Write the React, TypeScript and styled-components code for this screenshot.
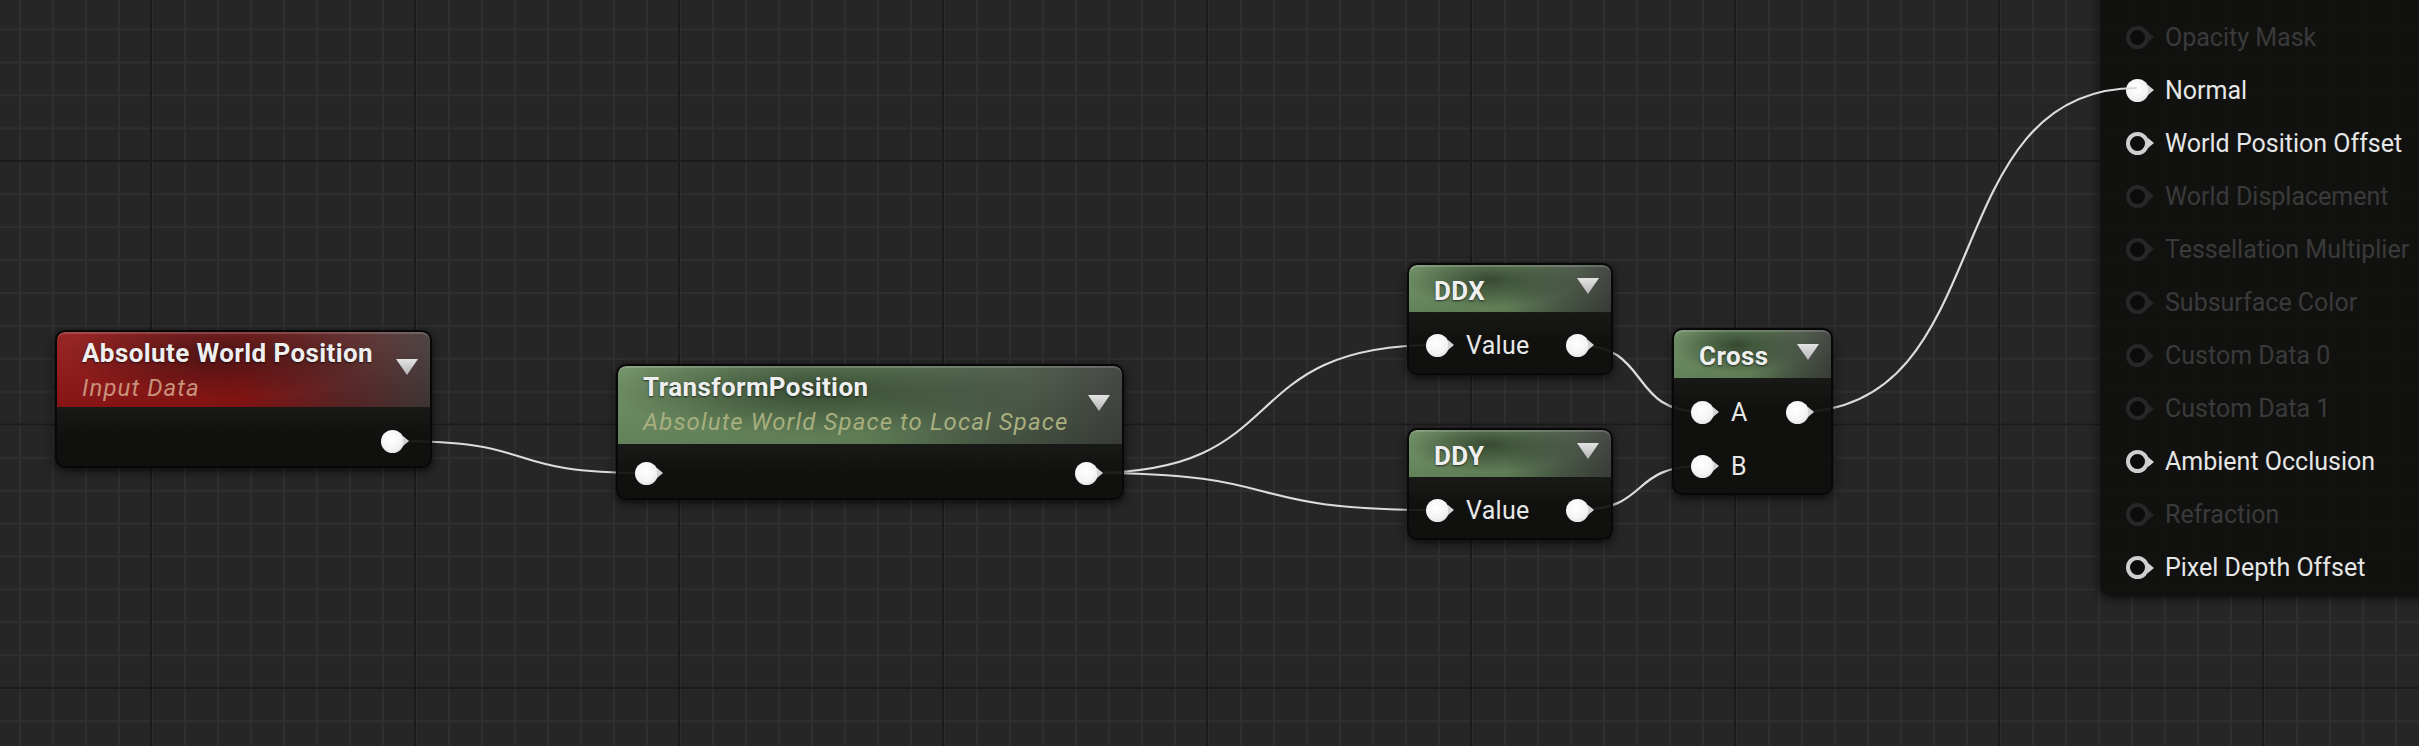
import React from 'react';
import styled, { createGlobalStyle, css } from 'styled-components';

type Tone = 'red' | 'green';
type Pt = [number, number];

const GlobalStyle = createGlobalStyle`
  html, body { margin: 0; padding: 0; background: #262626; }
  body { font-family: Roboto, "Noto Sans", Arial, sans-serif; overflow: hidden; }
`;

const Canvas = styled.div`
  position: relative;
  width: 2419px;
  height: 746px;
  overflow: hidden;
  background-color: #262626;
  background-image:
    linear-gradient(to right, #1b1b1b 0 2px, transparent 2px),
    linear-gradient(to bottom, #1b1b1b 0 2px, transparent 2px),
    linear-gradient(to right, #2f2f2f 0 2px, transparent 2px),
    linear-gradient(to bottom, #2f2f2f 0 2px, transparent 2px);
  background-size: 264px 100%, 100% 263.5px, 33px 100%, 100% 32.94px;
  background-position: 150px 0, 0 160px, 19px 0, 0 28.5px;
`;

const WireLayer = styled.svg`
  position: absolute;
  left: 0;
  top: 0;
  z-index: 2;
  pointer-events: none;
  path {
    fill: none;
    stroke: #dcdcdc;
    stroke-width: 2.2;
  }
`;

const Node = styled.div<{ $x: number; $y: number; $w: number }>`
  position: absolute;
  left: ${(p) => p.$x}px;
  top: ${(p) => p.$y}px;
  width: ${(p) => p.$w}px;
  box-sizing: border-box;
  border: 2px solid #080808;
  border-radius: 10px;
  background: rgba(15, 16, 14, 0.93);
  box-shadow: 0 3px 10px rgba(0, 0, 0, 0.7);
  overflow: hidden;
  z-index: 3;
`;

const tones = {
  red: css`
    background:
      linear-gradient(to bottom, rgba(255, 255, 255, 0.07), rgba(0, 0, 0, 0.08)),
      radial-gradient(ellipse 42% 60% at 44% 28%, rgba(25, 0, 0, 0.6), rgba(25, 0, 0, 0) 100%),
      linear-gradient(to right, #921616 0%, #891313 50%, #5e2424 76%, #433838 100%);
  `,
  green: css`
    background:
      linear-gradient(to bottom, rgba(255, 255, 255, 0.06), rgba(0, 0, 0, 0.08)),
      radial-gradient(ellipse 42% 60% at 40% 30%, rgba(10, 22, 8, 0.6), rgba(10, 22, 8, 0) 100%),
      linear-gradient(to right, #6b8d61 0%, #65865b 48%, #4b5c47 74%, #3c3f3b 100%);
  `,
};

const Header = styled.div<{ $tone: Tone; $h: number }>`
  height: ${(p) => p.$h}px;
  box-sizing: border-box;
  display: flex;
  align-items: flex-start;
  justify-content: space-between;
  padding: 0 12px 0 25px;
  border-radius: 8px 8px 0 0;
  box-shadow: inset 0 2px 0 rgba(255, 255, 255, 0.16);
  ${(p) => tones[p.$tone]};
`;

const HeaderText = styled.div<{ $pt: number }>`
  display: flex;
  flex-direction: column;
  padding-top: ${(p) => p.$pt}px;
  min-width: 0;
`;

const Title = styled.div`
  font-size: 26px;
  line-height: 26px;
  font-weight: 700;
  letter-spacing: 0.4px;
  color: #efefef;
  white-space: nowrap;
  text-shadow: 0 1px 2px rgba(0, 0, 0, 0.6);
`;

const Subtitle = styled.div<{ $color: string }>`
  margin-top: 11px;
  font-size: 24px;
  line-height: 23px;
  font-style: italic;
  letter-spacing: 1.1px;
  color: ${(p) => p.$color};
  white-space: nowrap;
`;

const ArrowSvg = styled.svg`
  flex: none;
  align-self: center;
  margin-bottom: 5px;
  width: 22px;
  height: 16px;
`;

const DropArrow = () => (
  <ArrowSvg viewBox="0 0 22 16">
    <defs>
      <linearGradient id="dropGrad" x1="0" y1="0" x2="0" y2="1">
        <stop offset="0" stopColor="#e4e4e4" />
        <stop offset="1" stopColor="#b4b4b4" />
      </linearGradient>
    </defs>
    <polygon points="0,0 22,0 11,16" fill="url(#dropGrad)" />
  </ArrowSvg>
);

const Body = styled.div<{ $pt: number; $pb: number; $gap?: number }>`
  display: flex;
  flex-direction: column;
  gap: ${(p) => p.$gap ?? 0}px;
  padding: ${(p) => p.$pt}px 0 ${(p) => p.$pb}px;
  background: linear-gradient(to bottom, rgba(40, 42, 38, 0.35), rgba(0, 0, 0, 0) 30px);
`;

const PinRow = styled.div<{ $pr?: number }>`
  height: 24px;
  display: flex;
  align-items: center;
  justify-content: space-between;
  padding: 0 ${(p) => p.$pr ?? 17}px 0 17px;
`;

const PinSide = styled.div`
  display: flex;
  align-items: center;
  gap: 12px;
  margin-right: auto;
`;

const PinLabel = styled.span`
  font-size: 25px;
  line-height: 25px;
  letter-spacing: 0.3px;
  color: #e8e8e8;
  white-space: nowrap;
`;

const PinShape = styled.span`
  flex: none;
  display: inline-flex;
  align-items: center;
`;

const PinDot = styled.span<{ $filled: boolean; $dim: boolean }>`
  width: 23px;
  height: 23px;
  box-sizing: border-box;
  border-radius: 50%;
  ${(p) =>
    p.$filled
      ? css`
          background: radial-gradient(circle at 45% 40%, #ffffff 0%, #f4f4f4 55%, #cdcdcd 100%);
        `
      : css`
          background: #0c0c0c;
          border: 4px solid ${p.$dim ? '#272727' : '#cfcfcf'};
        `}
`;

const PinTip = styled.span<{ $dim: boolean }>`
  width: 0;
  height: 0;
  margin-left: -1px;
  border-left: 6px solid ${(p) => (p.$dim ? '#272727' : '#d4d4d4')};
  border-top: 5px solid transparent;
  border-bottom: 5px solid transparent;
`;

const Pin = ({ filled = true, dim = false }: { filled?: boolean; dim?: boolean }) => (
  <PinShape>
    <PinDot $filled={filled} $dim={dim} />
    <PinTip $dim={dim} />
  </PinShape>
);

const OutputPanel = styled.div`
  position: absolute;
  left: 2100px;
  top: -40px;
  width: 340px;
  box-sizing: border-box;
  padding: 50.5px 0 2.5px 26px;
  display: flex;
  flex-direction: column;
  background: rgba(17, 18, 16, 0.96);
  border-radius: 0 0 0 12px;
  box-shadow: -2px 2px 8px rgba(0, 0, 0, 0.55);
  z-index: 1;
`;

const PanelRow = styled.div`
  height: 53.1px;
  display: flex;
  align-items: center;
  gap: 11px;
`;

const PanelLabel = styled.span<{ $dim: boolean }>`
  font-size: 25px;
  line-height: 25px;
  color: ${(p) => (p.$dim ? '#3a3a3a' : '#e6e6e6')};
  white-space: nowrap;
`;

const outputs = [
  { label: 'Opacity Mask', dim: true, filled: false },
  { label: 'Normal', dim: false, filled: true },
  { label: 'World Position Offset', dim: false, filled: false },
  { label: 'World Displacement', dim: true, filled: false },
  { label: 'Tessellation Multiplier', dim: true, filled: false },
  { label: 'Subsurface Color', dim: true, filled: false },
  { label: 'Custom Data 0', dim: true, filled: false },
  { label: 'Custom Data 1', dim: true, filled: false },
  { label: 'Ambient Occlusion', dim: false, filled: false },
  { label: 'Refraction', dim: true, filled: false },
  { label: 'Pixel Depth Offset', dim: false, filled: false },
];

const P = {
  awpOut: [396, 441] as Pt,
  tpIn: [646, 473] as Pt,
  tpOut: [1090, 473] as Pt,
  ddxIn: [1437, 345] as Pt,
  ddxOut: [1577, 345] as Pt,
  ddyIn: [1437, 510] as Pt,
  ddyOut: [1577, 510] as Pt,
  crossA: [1702, 412] as Pt,
  crossB: [1702, 466] as Pt,
  crossOut: [1797, 412] as Pt,
  normal: [2137, 88] as Pt,
};

const wires: [Pt, Pt][] = [
  [P.awpOut, P.tpIn],
  [P.tpOut, P.ddxIn],
  [P.tpOut, P.ddyIn],
  [P.ddxOut, P.crossA],
  [P.ddyOut, P.crossB],
  [P.crossOut, P.normal],
];

const wirePath = (a: Pt, b: Pt) => {
  const t = Math.abs(b[0] - a[0]) * 0.6;
  return `M${a[0]},${a[1]} C${a[0] + t},${a[1]} ${b[0] - t},${b[1]} ${b[0]},${b[1]}`;
};

const App = () => (
  <>
    <GlobalStyle />
    <Canvas>
      <OutputPanel>
        {outputs.map((o) => (
          <PanelRow key={o.label}>
            <Pin filled={o.filled} dim={o.dim} />
            <PanelLabel $dim={o.dim}>{o.label}</PanelLabel>
          </PanelRow>
        ))}
      </OutputPanel>

      <WireLayer width={2419} height={746} viewBox="0 0 2419 746">
        {wires.map((w, i) => (
          <path key={i} d={wirePath(w[0], w[1])} />
        ))}
      </WireLayer>

      <Node $x={55} $y={330} $w={377}>
        <Header $tone="red" $h={75}>
          <HeaderText $pt={8}>
            <Title>Absolute World Position</Title>
            <Subtitle $color="#c8917a">Input Data</Subtitle>
          </HeaderText>
          <DropArrow />
        </Header>
        <Body $pt={22} $pb={13}>
          <PinRow $pr={21}>
            <PinSide />
            <Pin />
          </PinRow>
        </Body>
      </Node>

      <Node $x={616} $y={364} $w={508}>
        <Header $tone="green" $h={78}>
          <HeaderText $pt={8}>
            <Title>TransformPosition</Title>
            <Subtitle $color="#a8ae7e">Absolute World Space to Local Space</Subtitle>
          </HeaderText>
          <DropArrow />
        </Header>
        <Body $pt={17} $pb={13}>
          <PinRow $pr={19}>
            <PinSide>
              <Pin />
            </PinSide>
            <Pin />
          </PinRow>
        </Body>
      </Node>

      <Node $x={1407} $y={263} $w={206}>
        <Header $tone="green" $h={47}>
          <HeaderText $pt={13}>
            <Title>DDX</Title>
          </HeaderText>
          <DropArrow />
        </Header>
        <Body $pt={21} $pb={16}>
          <PinRow>
            <PinSide>
              <Pin />
              <PinLabel>Value</PinLabel>
            </PinSide>
            <Pin />
          </PinRow>
        </Body>
      </Node>

      <Node $x={1407} $y={428} $w={206}>
        <Header $tone="green" $h={47}>
          <HeaderText $pt={13}>
            <Title>DDY</Title>
          </HeaderText>
          <DropArrow />
        </Header>
        <Body $pt={21} $pb={16}>
          <PinRow>
            <PinSide>
              <Pin />
              <PinLabel>Value</PinLabel>
            </PinSide>
            <Pin />
          </PinRow>
        </Body>
      </Node>

      <Node $x={1672} $y={328} $w={161}>
        <Header $tone="green" $h={48}>
          <HeaderText $pt={13}>
            <Title>Cross</Title>
          </HeaderText>
          <DropArrow />
        </Header>
        <Body $pt={22} $pb={15} $gap={30}>
          <PinRow>
            <PinSide>
              <Pin />
              <PinLabel>A</PinLabel>
            </PinSide>
            <Pin />
          </PinRow>
          <PinRow>
            <PinSide>
              <Pin />
              <PinLabel>B</PinLabel>
            </PinSide>
          </PinRow>
        </Body>
      </Node>
    </Canvas>
  </>
);

export default App;
